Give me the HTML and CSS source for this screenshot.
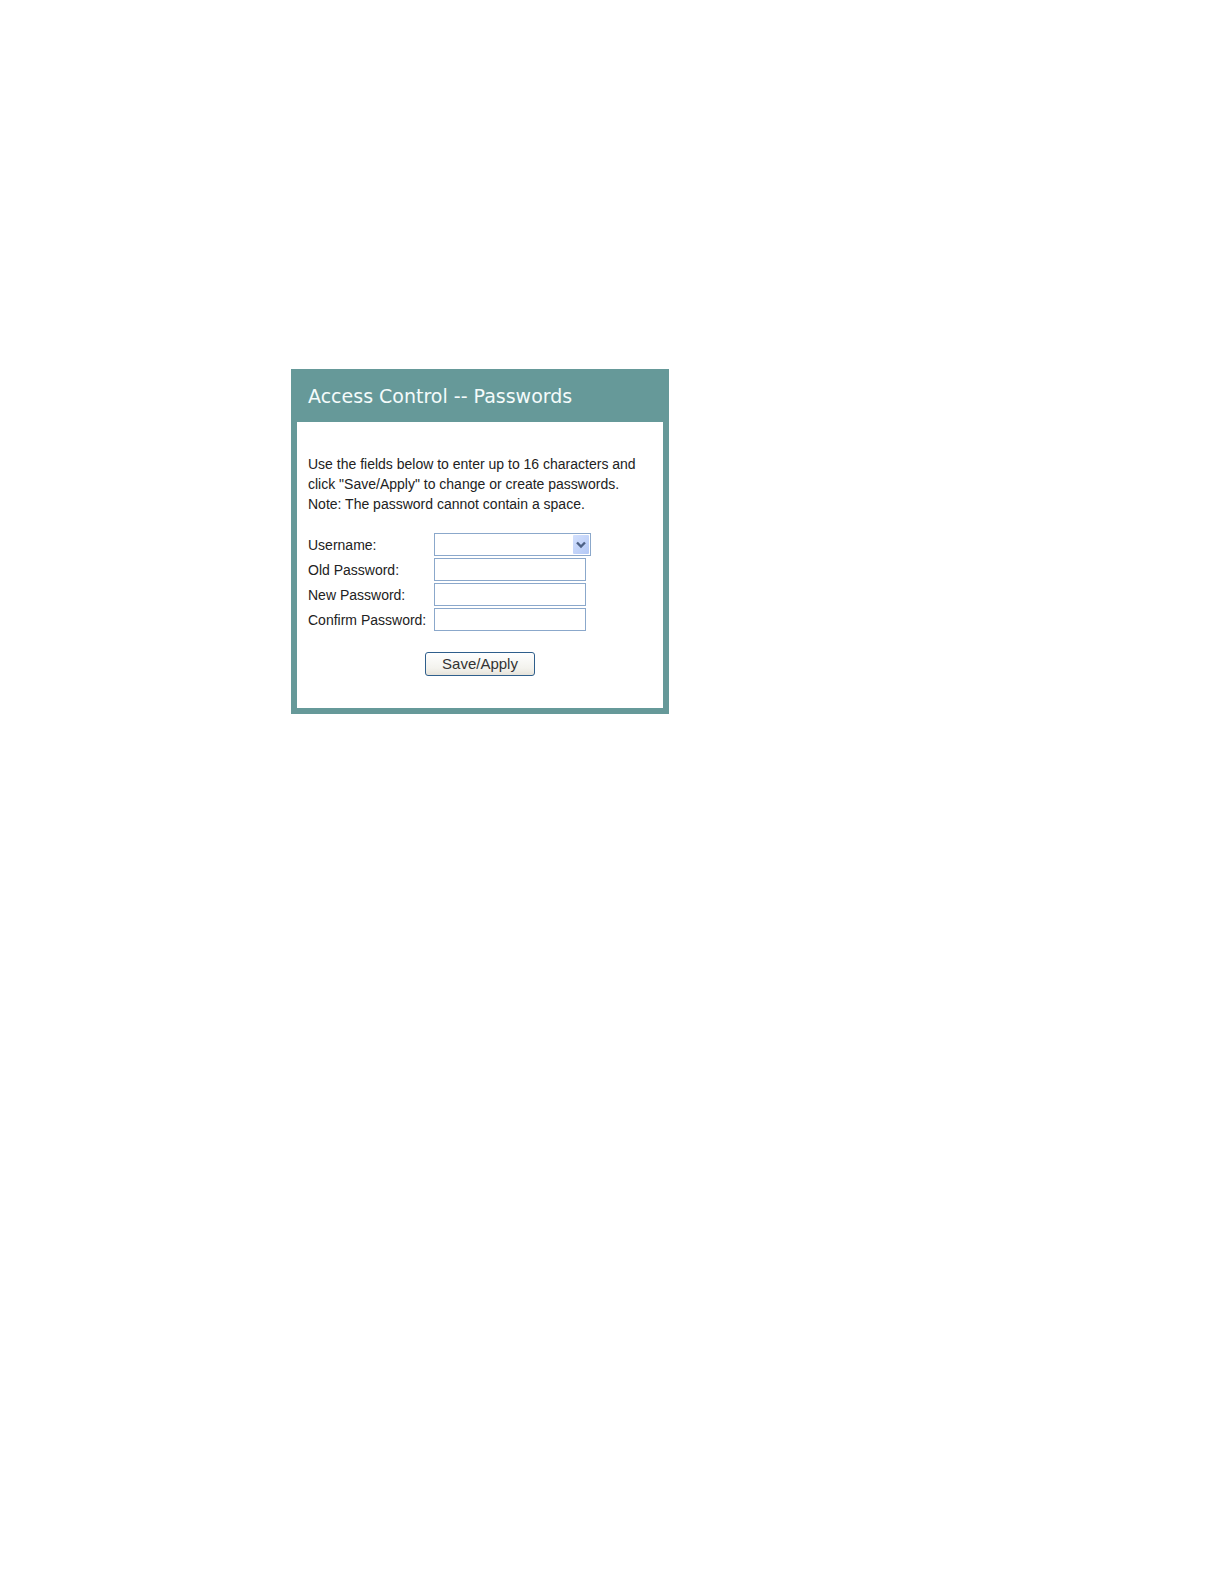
FILE: index.html
```html
<!DOCTYPE html>
<html lang="en">
<head>
    <meta charset="UTF-8">
    <meta name="viewport" content="width=device-width, initial-scale=1.0">
    <title>Access Control -- Passwords</title>
    <link rel="stylesheet" href="styles.css">
</head>
<body>
    <main class="panel">
        <h1 class="panel-title">Access Control -- Passwords</h1>
        <form class="panel-body">
            <p>Use the fields below to enter up to 16 characters and click "Save/Apply" to change or create passwords.</p>
            <p>Note: The password cannot contain a space.</p>

            <div class="fields">
                <label for="username">Username:</label>
                <div class="select-box">
                    <select id="username" name="username">
                        <option value=""></option>
                    </select>
                    <span class="select-arrow">
                        <svg width="10" height="8" viewBox="0 0 10 8" aria-hidden="true">
                            <path d="M1 1.5 L5 5.5 L9 1.5" fill="none" stroke="#4d6185" stroke-width="2.4"/>
                        </svg>
                    </span>
                </div>

                <label for="oldPassword">Old Password:</label>
                <input type="password" id="oldPassword" name="oldPassword" maxlength="16">

                <label for="newPassword">New Password:</label>
                <input type="password" id="newPassword" name="newPassword" maxlength="16">

                <label for="confirmPassword">Confirm Password:</label>
                <input type="password" id="confirmPassword" name="confirmPassword" maxlength="16">
            </div>

            <button type="button" class="save">Save/Apply</button>
        </form>
    </main>
</body>
</html>
```

FILE: styles.css
```css
* {
    box-sizing: border-box;
}

body {
    margin: 0;
    padding: 369px 24px 24px 291px;
    background-color: #fff;
    color: #222;
    font-family: "Liberation Sans", Arial, sans-serif;
    font-size: 14px;
    line-height: 20px;
}

.panel {
    max-width: 378px;
    padding: 0 6px 6px;
    background-color: #669999;
}

.panel-title {
    margin: 0;
    padding: 15px 11px 14px;
    color: #f4fbfb;
    font-family: "DejaVu Sans", Verdana, sans-serif;
    font-size: 19px;
    font-weight: normal;
    line-height: 24px;
}

.panel-body {
    padding: 32px 11px;
    background-color: #fff;
}

.panel-body p {
    margin: 0;
}

.fields {
    display: grid;
    grid-template-columns: 126px auto;
    justify-content: start;
    align-items: center;
    row-gap: 2px;
    margin: 19px 0 21px;
}

.fields input,
.fields select {
    display: block;
    width: 152px;
    height: 23px;
    padding: 2px 4px;
    border: 1px solid #8ba8cb;
    border-radius: 0;
    background-color: #fff;
    font: inherit;
}

.select-box {
    position: relative;
}

.fields select {
    width: 157px;
    padding-right: 20px;
    appearance: none;
}

.select-arrow {
    position: absolute;
    top: 2px;
    right: 2px;
    bottom: 2px;
    display: flex;
    align-items: center;
    justify-content: center;
    width: 16px;
    border-radius: 1px;
    background: linear-gradient(135deg, #d3e0fd, #b3c8f5);
    pointer-events: none;
}

.save {
    display: block;
    min-width: 110px;
    height: 24px;
    margin: 0 auto;
    padding: 0 16px;
    border: 1px solid #2f5f8c;
    border-radius: 3px;
    background: linear-gradient(#fff, #f3f2ed 70%, #e6e3da);
    color: #333;
    font-family: inherit;
    font-size: 15px;
    line-height: 20px;
}
```
